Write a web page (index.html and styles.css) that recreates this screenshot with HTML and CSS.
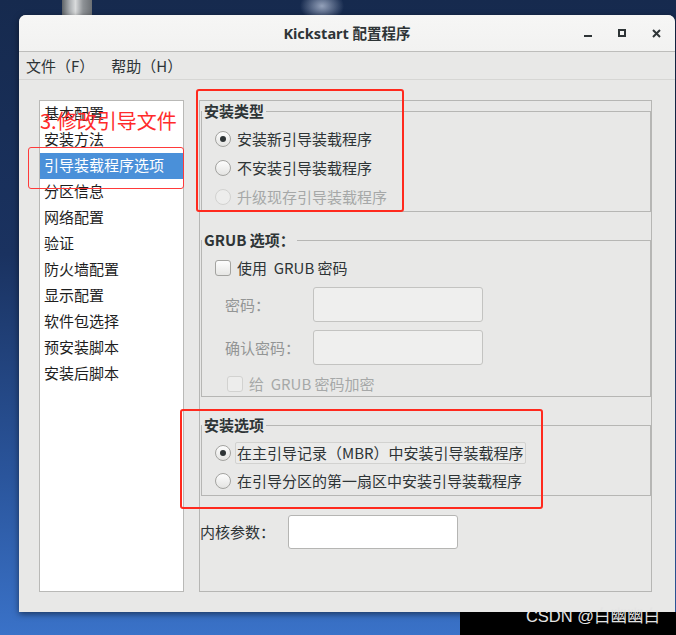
FILE: index.html
```html
<!DOCTYPE html>
<html lang="zh-CN">
<head>
<meta charset="utf-8">
<title>Kickstart 配置程序</title>
<link rel="stylesheet" href="styles.css">
</head>
<body>
<div class="desktop">
  <div class="window">
    <div class="titlebar">
      <div class="tb-side"></div>
      <div class="title">Kickstart 配置程序</div>
      <div class="controls">
        <span class="ctl-min"></span>
        <span class="ctl-max"></span>
        <svg class="ctl-close" width="9" height="9" viewBox="0 0 9 9"><path d="M1 1L8 8M8 1L1 8" stroke="#2e3436" stroke-width="2" fill="none"/></svg>
      </div>
    </div>
    <div class="menubar">
      <span class="menu">文件（F）</span>
      <span class="menu">帮助（H）</span>
    </div>
    <div class="content">
      <ul class="nav">
        <li>基本配置</li>
        <li>安装方法</li>
        <li class="sel">引导装载程序选项</li>
        <li>分区信息</li>
        <li>网络配置</li>
        <li>验证</li>
        <li>防火墙配置</li>
        <li>显示配置</li>
        <li>软件包选择</li>
        <li>预安装脚本</li>
        <li>安装后脚本</li>
      </ul>
      <div class="panel">
        <fieldset class="frame f1">
          <legend>安装类型</legend>
          <div class="opts">
            <div class="row"><span class="radio on"></span><span>安装新引导装载程序</span></div>
            <div class="row"><span class="radio"></span><span>不安装引导装载程序</span></div>
            <div class="row dis"><span class="radio"></span><span>升级现存引导装载程序</span></div>
          </div>
        </fieldset>
        <fieldset class="frame f2">
          <legend>GRUB 选项：</legend>
          <div class="grub">
            <div class="row chk-row"><span class="check"></span><span class="pre">使用  GRUB 密码</span></div>
            <div class="pw">
              <span class="pw-label">密码：</span>
              <span class="entry off"></span>
              <span class="pw-label">确认密码：</span>
              <span class="entry off"></span>
            </div>
            <div class="row dis enc-row"><span class="check"></span><span class="pre">给  GRUB 密码加密</span></div>
          </div>
        </fieldset>
        <fieldset class="frame f3">
          <legend>安装选项</legend>
          <div class="opts">
            <div class="row"><span class="radio on"></span><span class="hl">在主引导记录（MBR）中安装引导装载程序</span></div>
            <div class="row"><span class="radio"></span><span>在引导分区的第一扇区中安装引导装载程序</span></div>
          </div>
        </fieldset>
        <div class="kernel">
          <span class="k-label">内核参数：</span>
          <span class="entry k-entry"></span>
        </div>
      </div>
    </div>
  </div>

  <div class="note">3.修改引导文件</div>
  <div class="mark mark-nav"></div>
  <div class="mark mark-type"></div>
  <div class="mark mark-opts"></div>
  <div class="watermark">CSDN @白幽幽白</div>
</div>
</body>
</html>
```

FILE: styles.css
```css
* { box-sizing: border-box; }
html, body { margin: 0; padding: 0; }
body {
  width: 676px;
  height: 635px;
  overflow: hidden;
  font-family: "Noto Sans CJK SC", "Noto Sans", sans-serif;
  color: #2e3436;
}

.desktop {
  position: relative;
  width: 676px;
  height: 635px;
  padding: 15px 0 0 19px;
  background:
    linear-gradient(#000, #000) 460px 612px / 216px 23px no-repeat,
    radial-gradient(ellipse 22px 16px at 322px 6px, rgba(170,182,205,0.85), rgba(170,182,205,0) 100%) no-repeat,
    linear-gradient(90deg, #5d6266 0%, #a9adb0 25%, #d9dbdc 45%, #8e9296 70%, #6c7074 100%) 62px 0 / 30px 15px no-repeat,
    linear-gradient(180deg, #162a4e 0%, #1a3260 40%, #2a559c 75%, #3a72c8 100%);
}

.window {
  width: 656px;
  height: 597px;
  background: #e8e8e7;
  border-radius: 7px 7px 0 0;
  box-shadow: 0 2px 6px rgba(0,0,0,0.5);
  display: flex;
  flex-direction: column;
  overflow: hidden;
}

.titlebar {
  height: 37px;
  flex: none;
  background: linear-gradient(#f6f6f5, #f2f2f1);
  border-bottom: 1px solid #bdbdbb;
  display: grid;
  grid-template-columns: 1fr auto 1fr;
  align-items: center;
}
.title {
  font-family: "Noto Sans", "Noto Sans CJK SC", sans-serif;
  font-weight: 700;
  font-size: 14.5px;
  line-height: 18px;
  color: #2e3436;
}
.controls {
  justify-self: end;
  display: flex;
  align-items: flex-end;
  gap: 26px;
  padding-right: 14px;
  height: 9px;
}
.ctl-min { width: 8px; height: 2px; background: #2e3436; margin-bottom: 1px; }
.ctl-max { width: 8px; height: 8px; border: 2px solid #2e3436; margin-bottom: 1px; }
.ctl-close { display: block; }

.menubar {
  height: 28px;
  flex: none;
  border-bottom: 1px solid #d6d6d4;
  display: flex;
  align-items: center;
  gap: 17px;
  padding-left: 7px;
  font-size: 15px;
  line-height: 18px;
}

.content {
  flex: 1;
  display: flex;
  gap: 15px;
  padding: 20px 23px 20px 20px;
  min-height: 0;
}

.nav {
  width: 145px;
  flex: none;
  margin: 0;
  padding: 0;
  list-style: none;
  background: #fff;
  border: 1px solid #b9b9b7;
}
.nav li {
  height: 26px;
  line-height: 24px;
  padding-left: 4px;
  font-size: 15px;
  color: #1e1e1e;
}
.nav li.sel { background: #4a90d9; color: #fff; }

.panel {
  flex: 1;
  border: 1px solid #b6b6b4;
  padding: 1px 0 0 1px;
  display: flex;
  flex-direction: column;
}

.frame {
  margin: 0;
  padding: 0;
  border: 1px solid #b6b6b4;
  min-width: 0;
}
.frame legend {
  padding: 0 2px;
  margin: 0;
  font-weight: 700;
  font-size: 15px;
  line-height: 18px;
  color: #2e3436;
}
.f2 { margin-top: 19px; }
.f3 { margin-top: 19px; }

.opts { padding: 4px 0 0 13px; }
.f1 .row { height: 29px; }
.f3 .opts { padding-top: 5px; }
.f3 .row { height: 28px; }

.row {
  display: flex;
  align-items: center;
  gap: 6px;
  font-size: 15px;
  line-height: 18px;
}
.row.dis { color: #a6a8a8; }
.pre { white-space: pre; }

.radio {
  width: 16px;
  height: 16px;
  flex: none;
  border-radius: 50%;
  border: 1px solid #a3a3a0;
  background: linear-gradient(#fdfdfd, #e4e4e2);
  display: flex;
  align-items: center;
  justify-content: center;
}
.radio.on::after {
  content: "";
  width: 6px;
  height: 6px;
  border-radius: 50%;
  background: #2e3436;
}
.row.dis .radio { border-color: #d2d2d0; background: #ededec; }

.check {
  width: 16px;
  height: 16px;
  flex: none;
  border-radius: 3px;
  border: 1px solid #a3a3a0;
  background: linear-gradient(#fdfdfd, #e6e6e4);
}
.row.dis .check { border-color: #d2d2d0; background: #ededec; }

.grub { padding: 6px 0 0 13px; }
.chk-row { height: 26px; }
.pw {
  display: grid;
  grid-template-columns: 98px 170px;
  row-gap: 8px;
  align-items: center;
  margin-top: 6px;
}
.pw-label {
  padding-left: 10px;
  font-size: 15px;
  line-height: 18px;
  color: #939595;
}
.entry {
  display: block;
  width: 170px;
  height: 35px;
  border: 1px solid #c3c3c1;
  border-radius: 3px;
  background: #fff;
}
.entry.off { background: #efefee; }
.enc-row { height: 25px; margin-top: 6px; padding-left: 12px; }

.hl {
  margin-left: -2px;
  padding: 1px 1px;
  border: 1px solid #d2d2d0;
  border-radius: 2px;
  background: #ebebea;
}

.kernel {
  margin-top: 19px;
  margin-left: -1px;
  display: flex;
  align-items: center;
}
.k-label { font-size: 15px; line-height: 18px; }
.k-entry { height: 34px; margin-left: 13px; border-color: #b5b5b3; }

/* annotations drawn over the screenshot */
.note {
  position: absolute;
  left: 40px;
  top: 110px;
  font-size: 20px;
  line-height: 22px;
  color: #ff2b2b;
  white-space: nowrap;
}
.mark {
  position: absolute;
  border: 2.5px solid #ff2a1e;
  border-radius: 3px;
}
.mark-nav { left: 28px; top: 147px; width: 156px; height: 42px; border-width: 1px; border-color: #ff3a3a; }
.mark-type { left: 196px; top: 89px; width: 208px; height: 123px; }
.mark-opts { left: 180px; top: 409px; width: 363px; height: 100px; }

.watermark {
  position: absolute;
  right: 16px;
  top: 606px;
  font-family: "Liberation Sans", "Noto Sans CJK SC", sans-serif;
  font-size: 16.5px;
  line-height: 20px;
  color: #e4e4e4;
  white-space: nowrap;
}
```
